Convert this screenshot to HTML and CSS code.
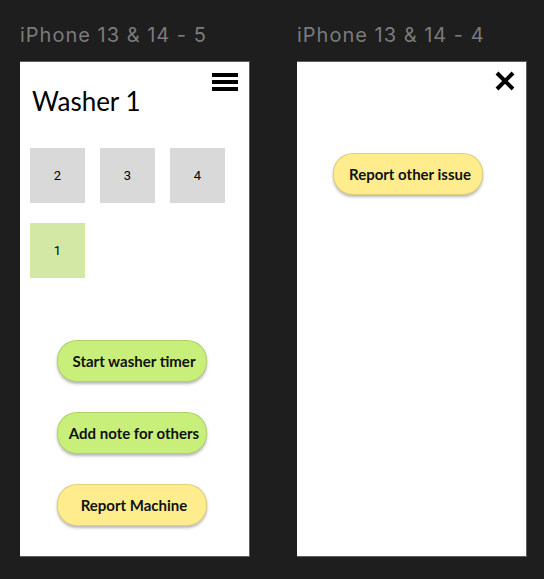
FILE: index.html
```html
<!DOCTYPE html>
<html>
<head>
<meta charset="utf-8">
<link rel="stylesheet" href="styles.css">
</head>
<body>
<div class="canvas">
  <section class="screen">
    <div class="label">iPhone 13 &amp; 14 - 5</div>
    <div class="frame">
      <svg class="menu" width="26" height="18" viewBox="0 0 26 18"><rect x="0" y="0" width="26" height="4"/><rect x="0" y="7" width="26" height="4"/><rect x="0" y="14" width="26" height="4"/></svg>
      <h1 class="title">Washer 1</h1>
      <div class="grid">
        <div class="cell">2</div>
        <div class="cell">3</div>
        <div class="cell">4</div>
        <div class="cell active">1</div>
      </div>
      <div class="actions">
        <button class="btn green">Start washer timer</button>
        <button class="btn green">Add note for others</button>
        <button class="btn yellow">Report Machine</button>
      </div>
    </div>
  </section>
  <section class="screen">
    <div class="label">iPhone 13 &amp; 14 - 4</div>
    <div class="frame">
      <svg class="close" width="20" height="20" viewBox="0 0 20 20"><path d="M2 2 L18 18 M18 2 L2 18" stroke="#000" stroke-width="4" stroke-linecap="butt"/></svg>
      <div class="actions single">
        <button class="btn yellow">Report other issue</button>
      </div>
    </div>
  </section>
</div>
</body>
</html>
```

FILE: styles.css
```css
html, body {
  margin: 0;
  padding: 0;
  background: #1e1e1e;
}
.canvas {
  display: flex;
  gap: 47px;
  padding: 21px 0 0 20px;
}
.screen {
  display: flex;
  flex-direction: column;
}
.label {
  font-family: Inter, "Noto Sans", sans-serif;
  font-size: 20px;
  letter-spacing: 1px;
  line-height: 28px;
  color: #7b7b7b;
  height: 28px;
  margin-bottom: 12px;
  white-space: nowrap;
}
.frame {
  position: relative;
  width: 229px;
  height: 494px;
  background: #fff;
  border-top: 1px solid #5e5e5e;
  border-right: 1px solid #5e5e5e;
  border-bottom: 1px solid #5e5e5e;
  box-sizing: content-box;
}
.menu {
  position: absolute;
  top: 11px;
  right: 11px;
  fill: #000;
}
.close {
  position: absolute;
  top: 9px;
  right: 11px;
}
.title {
  margin: 23px 0 0 12px;
  font-family: Lato, "Open Sans", sans-serif;
  font-weight: 400;
  font-size: 26px;
  line-height: 32px;
  color: #000;
}
.grid {
  display: grid;
  grid-template-columns: repeat(3, 55px);
  grid-auto-rows: 55px;
  column-gap: 15px;
  row-gap: 20px;
  margin: 31px 0 0 10px;
}
.cell {
  background: #d9d9d9;
  display: flex;
  align-items: center;
  justify-content: center;
  font-family: Roboto, sans-serif;
  font-size: 13px;
  color: #000;
}
.cell.active {
  background: #d3e8a5;
}
.actions {
  display: flex;
  flex-direction: column;
  gap: 30px;
  margin: 62px 0 0 37px;
}
.actions.single {
  margin: 91px 0 0 36px;
}
.btn {
  width: 150px;
  height: 42px;
  border-radius: 20px;
  border: 1px solid rgba(0,0,0,0.12);
  box-shadow: 0 2px 3px rgba(0,0,0,0.28);
  font-family: Lato, sans-serif;
  font-weight: 700;
  font-size: 15px;
  color: #111;
  padding: 0 0 0 4px;
  cursor: pointer;
}
.btn.green {
  background: #c9ef7b;
}
.btn.yellow {
  background: #ffec8d;
}
```
